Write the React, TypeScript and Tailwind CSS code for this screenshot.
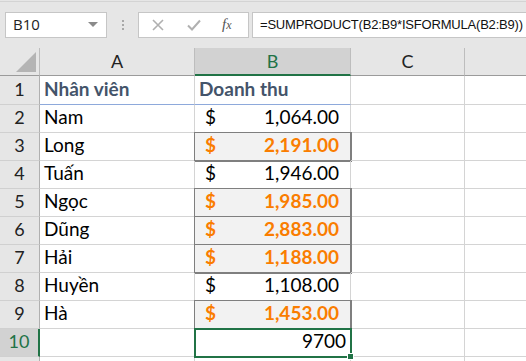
import React from 'react';

type Row = {
  n: number;
  name: string;
  amount?: string;
  calc?: boolean;
};

const rows: Row[] = [
  { n: 2, name: 'Nam', amount: '1,064.00' },
  { n: 3, name: 'Long', amount: '2,191.00', calc: true },
  { n: 4, name: 'Tuấn', amount: '1,946.00' },
  { n: 5, name: 'Ngọc', amount: '1,985.00', calc: true },
  { n: 6, name: 'Dũng', amount: '2,883.00', calc: true },
  { n: 7, name: 'Hải', amount: '1,188.00', calc: true },
  { n: 8, name: 'Huyền', amount: '1,108.00' },
  { n: 9, name: 'Hà', amount: '1,453.00', calc: true },
];

const font = { fontFamily: 'Lato, "Noto Sans", sans-serif' };

const App: React.FC = () => {
  return (
    <div className="w-[526px] h-[361px] overflow-hidden bg-white text-black" style={font}>
      {/* Formula bar */}
      <div className="h-[48px] bg-[#e6e6e6] pt-px">
        <div className="h-full border-t border-[#d4d4d4] flex items-center pl-[5px] pb-[1px]">
          <div className="w-[102px] h-[26px] bg-white border border-[#c6c6c6] flex items-center justify-between pl-[7px] pr-[8px]">
            <span className="text-[15px] text-[#222]" style={{ fontFamily: '"Open Sans", sans-serif' }}>B10</span>
            <span className="w-0 h-0 border-l-[5px] border-r-[5px] border-t-[5px] border-l-transparent border-r-transparent border-t-[#8a8a8a]" />
          </div>
          <div className="w-[31px] flex flex-col items-center gap-[2px]">
            <span className="w-[2px] h-[2px] bg-[#a8a8a8]" />
            <span className="w-[2px] h-[2px] bg-[#a8a8a8]" />
            <span className="w-[2px] h-[2px] bg-[#a8a8a8]" />
          </div>
          <div className="w-[111px] h-[26px] bg-white border border-[#c6c6c6] flex items-center">
            <svg className="ml-[13px]" width="12" height="12" viewBox="0 0 12 12">
              <path d="M1 1L11 11M11 1L1 11" stroke="#b0b0b0" strokeWidth="1.6" fill="none" />
            </svg>
            <svg className="ml-[23px]" width="14" height="12" viewBox="0 0 14 12">
              <path d="M1 6.5L5 10.5L13 1.5" stroke="#b0b0b0" strokeWidth="2" fill="none" />
            </svg>
            <span className="ml-[21px] text-[15px] italic text-[#555]" style={{ fontFamily: '"Liberation Serif", serif' }}>
              f<span className="text-[12px]">x</span>
            </span>
          </div>
          <div className="ml-[3px] flex-1 h-[26px] bg-white border-y border-l border-[#c6c6c6] flex items-center pl-[7px] whitespace-nowrap overflow-hidden">
            <span className="text-[13px] tracking-[-0.2px] text-[#111]" style={{ fontFamily: '"Liberation Sans", Arial, sans-serif' }}>
              =SUMPRODUCT(B2:B9*ISFORMULA(B2:B9))
            </span>
          </div>
        </div>
      </div>

      {/* Column headers */}
      <div className="flex h-[28px] bg-[#e6e6e6] text-[18px]">
        <div className="w-[40px] border-r border-b border-r-[#bdbdbd] border-b-[#9b9b9b] relative">
          <svg className="absolute right-[3px] bottom-[3px]" width="20" height="20" viewBox="0 0 20 20">
            <path d="M20 0V20H0Z" fill="#b4b4b4" />
          </svg>
        </div>
        <div className="w-[155px] border-r border-b border-r-[#bdbdbd] border-b-[#9b9b9b] flex items-center justify-center text-[#222]">A</div>
        <div className="w-[156px] bg-[#d2d2d2] border-r border-r-[#bdbdbd] border-b-2 border-b-[#217346] flex items-center justify-center text-[#217346]">B</div>
        <div className="w-[114px] border-r border-b border-r-[#bdbdbd] border-b-[#9b9b9b] flex items-center justify-center text-[#222]">C</div>
        <div className="flex-1 border-b border-b-[#9b9b9b]" />
      </div>

      {/* Row 1 */}
      <div className="flex h-[29px] text-[19px]">
        <div className="w-[40px] bg-[#e6e6e6] border-r border-b border-r-[#b0b0b0] border-b-[#d0d0d0] flex items-end justify-center pb-[1px] text-[18px] text-[#222]">1</div>
        <div className="w-[155px] border-r border-b border-r-[#d4d4d4] border-b-[#8ea9db] flex items-end px-[4px] pb-[1px] font-bold text-[#44546a]">Nhân viên</div>
        <div className="w-[156px] border-r border-b border-r-[#d4d4d4] border-b-[#8ea9db] flex items-end px-[4px] pb-[1px] font-bold text-[#44546a]">Doanh thu</div>
        <div className="w-[114px] border-r border-b border-[#d4d4d4]" />
        <div className="flex-1 border-b border-[#d4d4d4]" />
      </div>

      {rows.map((r) => (
        <div key={r.n} className="flex h-[28px] text-[19px]">
          <div className="w-[40px] bg-[#e6e6e6] border-r border-b border-r-[#b0b0b0] border-b-[#d0d0d0] flex items-end justify-center pb-[1px] text-[18px] text-[#222]">{r.n}</div>
          <div className="w-[155px] border-r border-b border-[#d4d4d4] flex items-end px-[4px] pb-[1px]">{r.name}</div>
          {r.calc ? (
            <div className="w-[156px] bg-[#f2f2f2] border-r border-b border-[#7f7f7f] shadow-[0_0_0_1px_#7f7f7f] flex items-end justify-between pl-[10px] pr-[11px] pb-[1px] font-bold text-[#fa7d00]">
              <span>$</span>
              <span>{r.amount}</span>
            </div>
          ) : (
            <div className="w-[156px] border-r border-b border-[#d4d4d4] flex items-end justify-between pl-[10px] pr-[11px] pb-[1px]">
              <span>$</span>
              <span>{r.amount}</span>
            </div>
          )}
          <div className="w-[114px] border-r border-b border-[#d4d4d4]" />
          <div className="flex-1 border-b border-[#d4d4d4]" />
        </div>
      ))}

      {/* Row 10 */}
      <div className="flex h-[28px] text-[19px]">
        <div className="w-[40px] bg-[#d2d2d2] border-r-2 border-b border-r-[#217346] border-b-[#d0d0d0] flex items-end justify-center pb-[1px] text-[18px] text-[#217346]">10</div>
        <div className="w-[155px] border-r border-b border-[#d4d4d4]" />
        <div className="w-[156px] border-r border-b border-[#d4d4d4] relative outline-2 outline-[#217346] -outline-offset-1 flex items-end justify-end pr-[4px] pb-[1px]">
          <span>9700</span>
          <span className="absolute right-[-4px] bottom-[-4px] w-[7px] h-[7px] bg-[#217346] border border-white" />
        </div>
        <div className="w-[114px] border-r border-b border-[#d4d4d4]" />
        <div className="flex-1 border-b border-[#d4d4d4]" />
      </div>

      {/* Row 11 */}
      <div className="flex h-[28px]">
        <div className="w-[40px] bg-[#e6e6e6] border-r border-r-[#b0b0b0]" />
        <div className="w-[155px] border-r border-[#d4d4d4]" />
        <div className="w-[156px] border-r border-[#d4d4d4]" />
        <div className="w-[114px] border-r border-[#d4d4d4]" />
        <div className="flex-1" />
      </div>
    </div>
  );
};

export default App;
